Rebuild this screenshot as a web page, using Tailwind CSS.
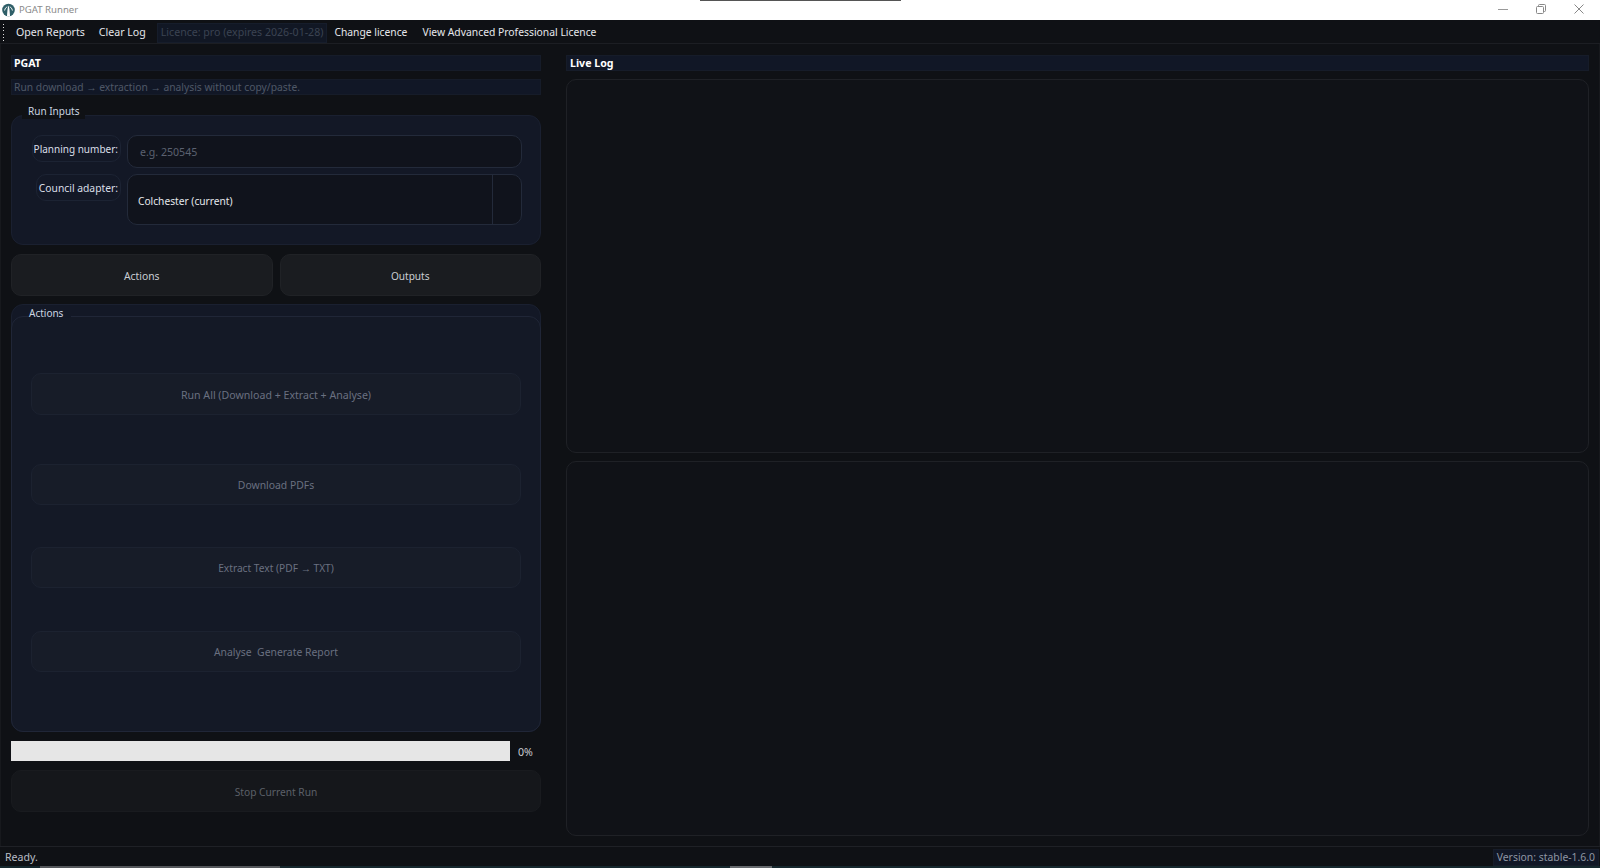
<!DOCTYPE html>
<html>
<head>
<meta charset="utf-8">
<script src="https://cdn.jsdelivr.net/npm/@tailwindcss/browser@4"></script>
</head>
<body class="m-0 overflow-hidden bg-[#0f1115]">
<div class="relative flex h-[868px] w-[1600px] flex-col overflow-hidden bg-[#0f1115] font-['Noto_Sans',sans-serif] text-[10.6px] leading-none text-[#e5e7eb]">
  <div class="absolute left-[700px] top-0 h-px w-[201px] bg-[#555]"></div>
  <!-- title bar -->
  <div class="flex h-5 shrink-0 items-center bg-white pl-[2px]">
    <svg width="13" height="14" viewBox="0 0 13 14"><circle cx="6.5" cy="7" r="6.3" fill="#2f5f68"/><path d="M6.5 2.5C5.6 5 5.4 7 5 13h3C7.6 7 7.4 5 6.5 2.5Z" fill="#fff"/><path d="M2.6 7.5C3 5.5 4 4.4 5.2 3.8M10.4 7.5C10 5.5 9 4.4 7.8 3.8" fill="none" stroke="#fff" stroke-width="1"/></svg>
    <span class="ml-[4px] text-[9.6px] text-[#8a8a8a]">PGAT Runner</span>
    <div class="ml-auto flex items-center gap-[28px] pb-[3px] pr-[16px]">
      <svg width="10" height="10" viewBox="0 0 10 10"><path d="M0 5.5h10" stroke="#999" stroke-width="1"/></svg>
      <svg width="10" height="10" viewBox="0 0 10 10" fill="none" stroke="#888"><rect x="0.5" y="2.5" width="7" height="7" rx="1"/><path d="M2.5 2.5V1.5a1 1 0 0 1 1-1h5a1 1 0 0 1 1 1v5a1 1 0 0 1-1 1h-1"/></svg>
      <svg width="10" height="10" viewBox="0 0 10 10"><path d="M0.5 0.5l9 9M9.5 0.5l-9 9" stroke="#888" stroke-width="1"/></svg>
    </div>
  </div>
  <!-- toolbar -->
  <div class="flex h-6 shrink-0 items-center border-b border-[#1c1e23] bg-[#0f1115] pl-[3px] pt-[2px]">
    <div class="mr-[12px] flex h-[18px] w-px flex-col justify-between">
      <span class="h-px w-px bg-[#ddd]"></span><span class="h-px w-px bg-[#ddd]"></span><span class="h-px w-px bg-[#ddd]"></span><span class="h-px w-px bg-[#ddd]"></span><span class="h-px w-px bg-[#ddd]"></span><span class="h-px w-px bg-[#ddd]"></span>
    </div>
    <span>Open Reports</span>
    <span class="ml-[14px]">Clear Log</span>
    <span class="ml-[11px] flex h-[20px] items-center border border-[#161d2b] bg-[#111724] px-[3px] text-[#3b4352]">Licence: pro (expires 2026-01-28)</span>
    <span class="ml-[7px] text-[10.3px]">Change licence</span>
    <span class="ml-[15px] text-[10.35px]">View Advanced Professional Licence</span>
  </div>
  <!-- main -->
  <div class="flex h-[802px] shrink-0 gap-[25px] border-x border-[#17191d] pl-[10px] pt-[11px]">
    <!-- left -->
    <div class="flex w-[530px] shrink-0 flex-col">
      <div class="flex h-4 items-center border border-[#161c29] bg-[#111726] pl-[2px] pt-px font-bold text-white">PGAT</div>
      <div class="mt-2 flex h-4 items-center border border-[#161c29] bg-[#111726] pl-[2px] pt-px text-[10.3px] text-[#4f5766]">Run download → extraction → analysis without copy/paste.</div>
      <!-- run inputs -->
      <div class="relative mt-5 flex h-[130px] flex-col gap-[6px] rounded-[12px] border border-[#1a2030] bg-[#131826] pl-[20px] pr-[18px] pt-[19px]">
        <span class="absolute left-[10px] top-[-12px] bg-[#0f1115] px-[6px] pb-[3px] pt-[2px] text-[10px] text-[#cbd5e1]">Run Inputs</span>
        <div class="flex h-[33px] items-start gap-[6px]">
          <span class="flex h-[27px] w-[89px] items-center justify-end whitespace-nowrap rounded-[10px] border border-[#1c2333] pr-[2px] pt-px text-[10px] text-[#d9dee6]">Planning number:</span>
          <div class="flex h-[33px] flex-1 items-center rounded-[10px] border border-[#232a3a] bg-[#10131c] pl-[12px] pt-[2px] text-[#5b6170]">e.g. 250545</div>
        </div>
        <div class="flex h-[51px] items-start gap-[6px]">
          <span class="ml-[4px] flex h-[27px] w-[85px] items-center justify-end whitespace-nowrap rounded-[10px] border border-[#1c2333] pr-[2px] pt-px text-[10.3px] text-[#d9dee6]">Council adapter:</span>
          <div class="flex h-[51px] flex-1 items-center rounded-[10px] border border-[#232a3a] bg-[#10131c]">
            <span class="flex-1 pl-[10px] pt-[3px] text-[10.2px] text-[#e5e7eb]">Colchester (current)</span>
            <span class="h-full w-[29px] border-l border-[#232a3a]"></span>
          </div>
        </div>
      </div>
      <!-- tabs -->
      <div class="mt-[9px] flex gap-[7px]">
        <div class="flex h-[42px] flex-1 items-center justify-center rounded-[10px] border border-[#202226] bg-[#1a1c20] pt-[3px] text-[10.3px] text-[#c9cdd3]">Actions</div>
        <div class="flex h-[42px] flex-1 items-center justify-center rounded-[10px] border border-[#202226] bg-[#1a1c20] pt-[2px] text-[10.1px] text-[#c9cdd3]">Outputs</div>
      </div>
      <!-- actions -->
      <div class="relative mt-2 h-[428px] rounded-[12px] border border-[#1a2030] bg-[#131826] pt-[11px]">
        <span class="absolute left-[17px] top-[3px] bg-[#131826] pr-[8px] text-[10px] text-[#cbd5e1]">Actions</span>
        <div class="mx-[-1px] flex h-[416px] flex-col rounded-[12px] border border-[#202637] bg-[#141926] px-[19px] pt-[56px]">
          <div class="flex h-[42px] shrink-0 items-center justify-center rounded-[10px] border border-[#1c2230] bg-[#171c28] pt-[2px] text-[#6a7080]">Run All (Download + Extract + Analyse)</div>
          <div class="mt-[49px] flex h-[41px] shrink-0 items-center justify-center rounded-[10px] border border-[#1c2230] bg-[#171c28] pt-px text-[10.4px] text-[#6a7080]">Download PDFs</div>
          <div class="mt-[42px] flex h-[41px] shrink-0 items-center justify-center rounded-[10px] border border-[#1c2230] bg-[#171c28] pt-px text-[10.2px] text-[#6a7080]">Extract Text (PDF → TXT)</div>
          <div class="mt-[43px] flex h-[41px] shrink-0 items-center justify-center whitespace-pre rounded-[10px] border border-[#1c2230] bg-[#171c28] pt-px text-[10.4px] text-[#6a7080]">Analyse  Generate Report</div>
        </div>
      </div>
      <!-- progress -->
      <div class="mt-[9px] flex h-5 items-center">
        <div class="h-5 w-[499px] bg-[#e6e6e6]"></div>
        <span class="ml-[8px] pt-[3px] text-[#c9cdd3]">0%</span>
      </div>
      <div class="mt-[9px] flex h-[42px] items-center justify-center rounded-[10px] border border-[#191b1f] bg-[#15171b] pt-[2px] text-[10.2px] text-[#5c6068]">Stop Current Run</div>
    </div>
    <!-- right -->
    <div class="flex w-[1023px] shrink-0 flex-col">
      <div class="flex h-4 items-center border border-[#161c29] bg-[#111726] pl-[3px] pt-px font-bold text-white">Live Log</div>
      <div class="mt-2 h-[374px] rounded-[10px] border border-[#1f2126] bg-[#101217]"></div>
      <div class="mt-2 h-[375px] rounded-[10px] border border-[#1f2126] bg-[#101217]"></div>
    </div>
  </div>
  <!-- status -->
  <div class="flex h-5 shrink-0 items-center justify-between border-t border-[#1f2126] pl-[5px] pr-px pt-[2px] text-[#b9bec6]">
    <span>Ready.</span>
    <span class="flex h-[17px] items-center border border-[#161c29] bg-[#111726] px-[3px] text-[10.4px] text-[#8f96a3]">Version: stable-1.6.0</span>
  </div>
  <!-- sliver of what lies below the window -->
  <div class="flex h-[2px] shrink-0 bg-[#16282e]">
    <span class="ml-[40px] h-full w-[240px] bg-[#55585c]"></span>
    <span class="ml-[450px] h-full w-[42px] bg-[#666a6e]"></span>
  </div>
</div>
</body>
</html>
